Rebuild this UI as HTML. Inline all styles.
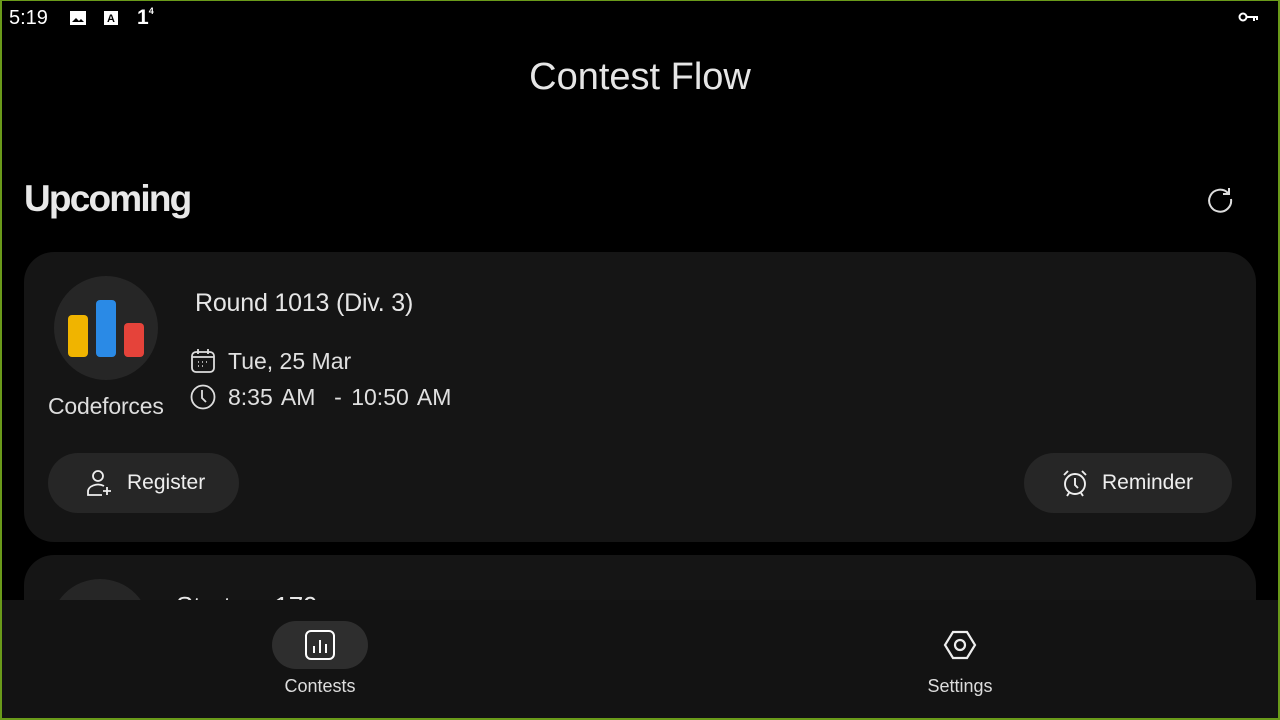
<!DOCTYPE html>
<html><head><style>
*{margin:0;padding:0;box-sizing:border-box}
body{width:1280px;height:720px;background:#000;overflow:hidden;position:relative;font-family:"Liberation Sans","DejaVu Sans",sans-serif;color:#e8e8e8}
.frame{position:absolute;inset:0;border:2px solid #6a9a1a;border-top-width:1px;z-index:10;pointer-events:none}
.abs{position:absolute}
.card{position:absolute;left:24px;width:1232px;background:#151515;border-radius:30px}
.btn{position:absolute;background:#262626;border-radius:30px;height:60px;display:flex;align-items:center;font-size:21px;color:#eee}
</style></head><body>
<div class="frame"></div>
<div class="abs" style="left:9px;top:7px;font-size:20px;color:#fff">5:19</div>
<svg class="abs" style="left:69px;top:10px" width="18" height="16" viewBox="0 0 18 16"><rect x="1" y="1" width="16" height="14" fill="#fff"/><path d="M3 12l4-4 3 3 2-2 3 3z" fill="#000"/></svg>
<svg class="abs" style="left:103px;top:10px" width="16" height="16" viewBox="0 0 16 16"><rect x="1" y="1" width="14" height="14" fill="#fff"/><text x="8" y="12" font-size="11" font-weight="bold" text-anchor="middle" fill="#000" font-family="Liberation Sans">A</text></svg>
<div class="abs" style="left:137px;top:6px;font-size:21px;color:#fff;font-weight:bold">1<span style="font-size:9px;vertical-align:top">4</span></div>
<svg class="abs" style="left:1238px;top:11px" width="22" height="12" viewBox="0 0 22 12"><circle cx="5" cy="6" r="3.5" fill="none" stroke="#fff" stroke-width="2"/><path d="M8.5 6H20M16 6v4M19 6v3" stroke="#fff" stroke-width="2" fill="none"/></svg>

<div class="abs" style="left:0;width:1280px;top:56px;text-align:center;font-size:38px;color:#e6e6e6">Contest Flow</div>
<div class="abs" style="left:24px;top:178px;font-size:37px;font-weight:bold;color:#e8e8e8;letter-spacing:-1.8px">Upcoming</div>
<svg class="abs" style="left:1206px;top:185px" width="28" height="28" viewBox="0 0 28 28"><path d="M22 8A11 11 0 1 0 25 14" fill="none" stroke="#ddd" stroke-width="2"/><path d="M23 3v6h-6" fill="none" stroke="#ddd" stroke-width="2"/></svg>

<div class="card" style="top:252px;height:290px">
<div class="abs" style="left:30px;top:24px;width:104px;height:104px;border-radius:50%;background:#262626"></div>
<div class="abs" style="left:44px;top:63px;width:20px;height:42px;background:#f0b400;border-radius:4px"></div>
<div class="abs" style="left:72px;top:48px;width:20px;height:57px;background:#2a8ae6;border-radius:4px"></div>
<div class="abs" style="left:100px;top:71px;width:20px;height:34px;background:#e5433a;border-radius:4px"></div>
<div class="abs" style="left:24px;top:141px;font-size:23px;color:#ddd;letter-spacing:-0.2px">Codeforces</div>
<div class="abs" style="left:171px;top:37px;font-size:25px;color:#e6e6e6;letter-spacing:-0.2px">Round 1013 (Div. 3)</div>
<svg class="abs" style="left:166px;top:96px" width="26" height="26" viewBox="0 0 26 26" fill="none" stroke="#ddd" stroke-width="1.8"><rect x="2" y="4" width="22" height="20" rx="4"/><path d="M2 9h22M8 1v5M18 1v5"/><path d="M8 14h1M12 14h1M16 14h1M8 18h1M12 18h1" stroke-width="1.6"/></svg>
<div class="abs" style="left:204px;top:96px;font-size:23px;color:#e0e0e0">Tue, 25 Mar</div>
<svg class="abs" style="left:166px;top:132px" width="26" height="26" viewBox="0 0 26 26" fill="none" stroke="#ddd" stroke-width="1.8"><circle cx="13" cy="13" r="11.5"/><path d="M12 6v8l4 4"/></svg>
<div class="abs" style="left:204px;top:132px;font-size:23px;color:#e0e0e0;word-spacing:3px">8:35 AM &nbsp;- 10:50 AM</div>
<div class="btn" style="left:24px;top:201px;width:191px;padding-left:36px">
<svg width="30" height="30" viewBox="0 0 30 30" fill="none" stroke="#eee" stroke-width="1.8"><circle cx="14" cy="8" r="5"/><path d="M20 18a10 7 0 0 0-16 6v3h14"/><path d="M23 19v8M19 23h8"/></svg>
<span style="margin-left:13px">Register</span></div>
<div class="btn" style="left:1000px;top:201px;width:208px;padding-left:36px">
<svg width="30" height="30" viewBox="0 0 30 30" fill="none" stroke="#eee" stroke-width="1.9"><circle cx="15" cy="16" r="10"/><path d="M15 10v7l3 3M4 7l4-4M26 7l-4-4M9 25l-2 3M21 25l2 3"/></svg>
<span style="margin-left:12px">Reminder</span></div>
</div>
<div class="card" style="top:555px;height:120px">
<div class="abs" style="left:26px;top:24px;width:100px;height:100px;border-radius:50%;background:#262626"></div>
<div class="abs" style="left:152px;top:36px;font-size:26px;color:#e6e6e6">Starters 179</div>
</div>

<div class="abs" style="left:0;top:600px;width:1280px;height:120px;background:#131313"></div>
<div class="abs" style="left:272px;top:621px;width:96px;height:48px;border-radius:24px;background:#2e2e2e"></div>
<svg class="abs" style="left:305px;top:630px" width="30" height="30" viewBox="0 0 30 30" fill="none" stroke="#fff" stroke-width="2"><rect x="1" y="1" width="28" height="28" rx="5"/><path d="M9 16v7M15 10v13M21 14v9"/></svg>
<div class="abs" style="left:270px;width:100px;top:676px;text-align:center;font-size:18px;color:#ddd">Contests</div>
<svg class="abs" style="left:943px;top:628px" width="34" height="34" viewBox="0 0 34 34" fill="none" stroke="#eee" stroke-width="2.2"><path d="M10 4h14l8 13-8 13H10L2 17z"/><circle cx="17" cy="17" r="5"/></svg>
<div class="abs" style="left:910px;width:100px;top:676px;text-align:center;font-size:18px;color:#ddd">Settings</div>
</body></html>
